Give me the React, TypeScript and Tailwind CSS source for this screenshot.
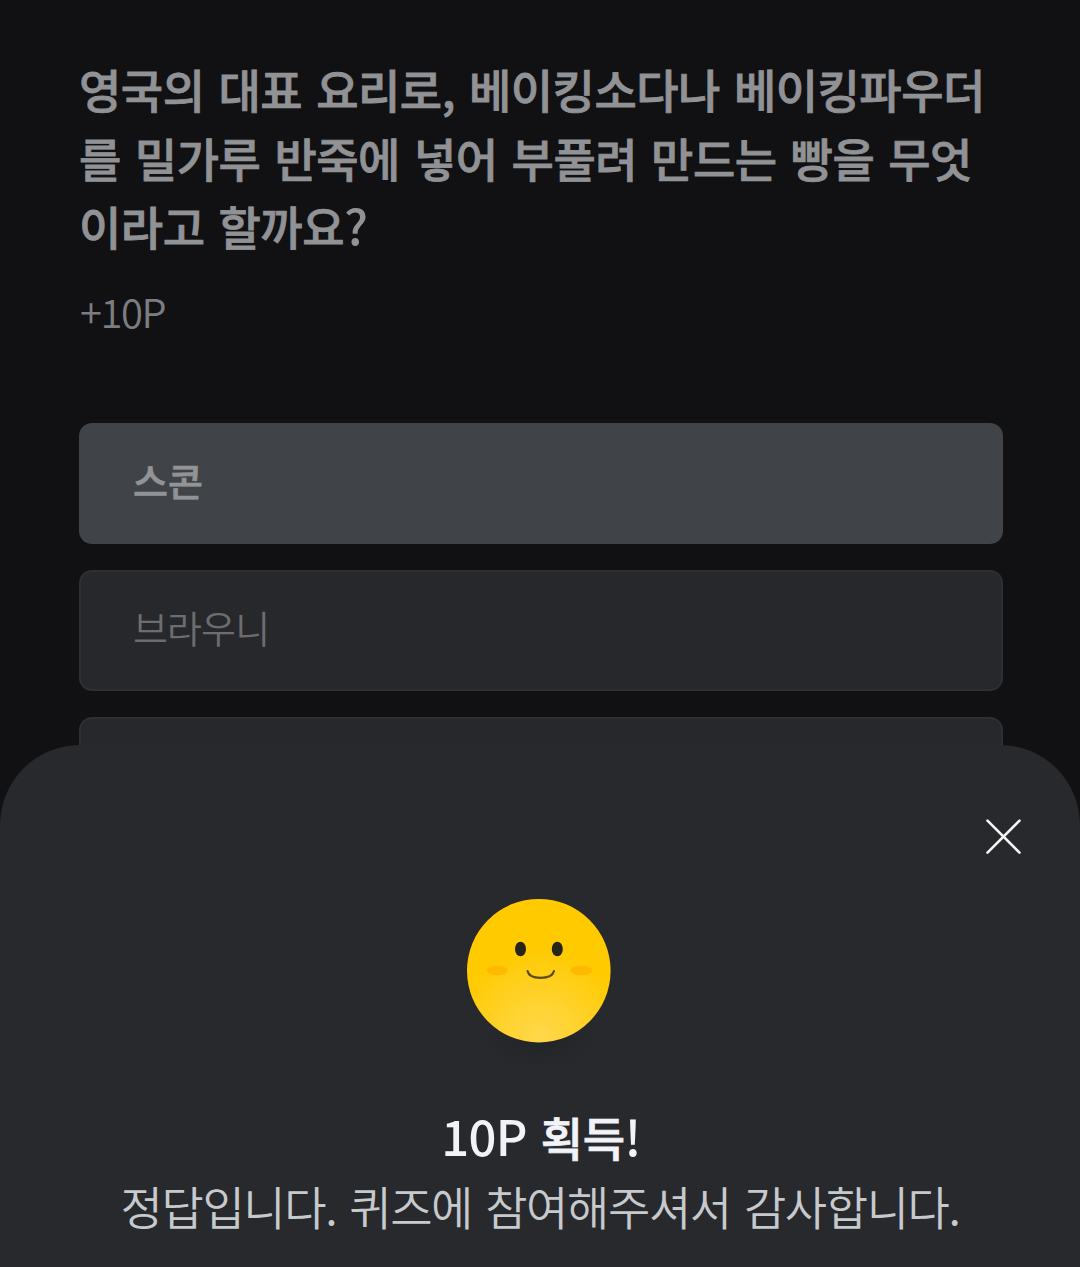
const question = [
  '영국의 대표 요리로, 베이킹소다나 베이킹파우더',
  '를 밀가루 반죽에 넣어 부풀려 만드는 빵을 무엇',
  '이라고 할까요',
];

function SmileFace() {
  return (
    <svg width="200" height="200" viewBox="0 0 200 200" className="shrink-0">
      <defs>
        <radialGradient id="face" gradientUnits="userSpaceOnUse" cx="100" cy="158" r="90">
          <stop offset="0" stopColor="#ffd84c" />
          <stop offset="0.45" stopColor="#ffd22c" />
          <stop offset="1" stopColor="#ffca00" />
        </radialGradient>
        <radialGradient id="shade">
          <stop offset="0" stopColor="#232428" />
          <stop offset="1" stopColor="#28292d" />
        </radialGradient>
      </defs>
      <ellipse cx="99" cy="158" rx="60" ry="32" fill="url(#shade)" />
      <circle cx="98.8" cy="90.7" r="71.8" fill="url(#face)" />
      <ellipse cx="80.5" cy="69" rx="5.5" ry="7.3" fill="#26231a" />
      <ellipse cx="117.3" cy="69" rx="5.5" ry="7.3" fill="#26231a" />
      <ellipse cx="57.3" cy="90.5" rx="10.5" ry="4.8" fill="#ffb900" />
      <ellipse cx="141.3" cy="90.5" rx="11" ry="4.8" fill="#ffb900" />
      <path d="M87.500 91c1 4.500 6 6.800 13 6.800s12.500-2.300 13.500-6.800" fill="none" stroke="#5c4a12" strokeWidth="2.200" strokeLinecap="round" />
    </svg>
  );
}

function CloseIcon() {
  return (
    <svg width="36" height="36" viewBox="0 0 36 36" fill="none" stroke="#f4f4f4" strokeWidth="2.600" strokeLinecap="round">
      <path d="M2.500 1.700l32 32M34.500 1.700l-32 32" />
    </svg>
  );
}

export default function App() {
  return (
    <div className="relative h-[1267px] w-[1080px] overflow-hidden bg-[#111113] font-['Noto_Sans_CJK_KR',sans-serif]">
      <main className="flex flex-col pt-[54px] pr-[77px] pl-[79px]">
        <h1 className="text-[46px] leading-[68.500px] font-medium tracking-[-0.500px] [word-spacing:4.200px] whitespace-nowrap text-[#919295] [-webkit-text-stroke:0.800px_#919295]">
          {question.map((line, i) => (
            <span key={line} className="block">
              {line}
              {i === question.length - 1 && <span className="text-[49px] leading-none [-webkit-text-stroke:0px]">?</span>}
            </span>
          ))}
        </h1>
        <p className="mt-[22px] pl-px text-[40px] leading-[58px] font-[350] tracking-[-1.500px] text-[#7c7d80]">+10P</p>

        <div className="mt-[83px] flex flex-col gap-[26px]">
          <button className="flex h-[121px] items-center rounded-[13px] bg-[#404347] pb-[8px] pl-[54px] text-left text-[38px] font-medium text-[#929396] [-webkit-text-stroke:0.700px_#929396]">
            스콘
          </button>
          <button className="flex h-[121px] items-center rounded-[13px] border-2 border-[#2e2f32] bg-[#26282b] pb-[8px] pl-[52px] text-left text-[38px] font-[350] tracking-[-0.900px] text-[#6c6d70]">
            브라우니
          </button>
          <button className="h-[121px] rounded-[13px] border-2 border-[#2e2f32] bg-[#26282b]" />
        </div>
      </main>

      {/* Result sheet over the quiz */}
      <section className="absolute inset-x-0 bottom-0 flex h-[522px] flex-col items-center rounded-t-[80px] bg-[#28292d]">
        <button aria-label="닫기" className="mt-[74px] mr-[59px] self-end">
          <CloseIcon />
        </button>
        <div className="mt-[25px]">
          <SmileFace />
        </div>
        <h2 className="mt-[22px] pl-[2px] text-[46px] leading-[68px] font-medium tracking-[-0.500px] [word-spacing:4.300px] text-[#f1f3f8] [-webkit-text-stroke:0.800px_#f1f3f8]">
          <span className="text-[49px] leading-none tracking-[-0.700px] [-webkit-text-stroke:0px]">10P</span> 획득
          <span className="text-[49px] leading-none [-webkit-text-stroke:0px]">!</span>
        </h2>
        <p className="mt-px text-[46px] leading-[68px] font-[350] tracking-[-1.400px] [word-spacing:4.300px] whitespace-nowrap text-[#c6cacd]">
          정답입니다. 퀴즈에 참여해주셔서 감사합니다.
        </p>
      </section>
    </div>
  );
}
